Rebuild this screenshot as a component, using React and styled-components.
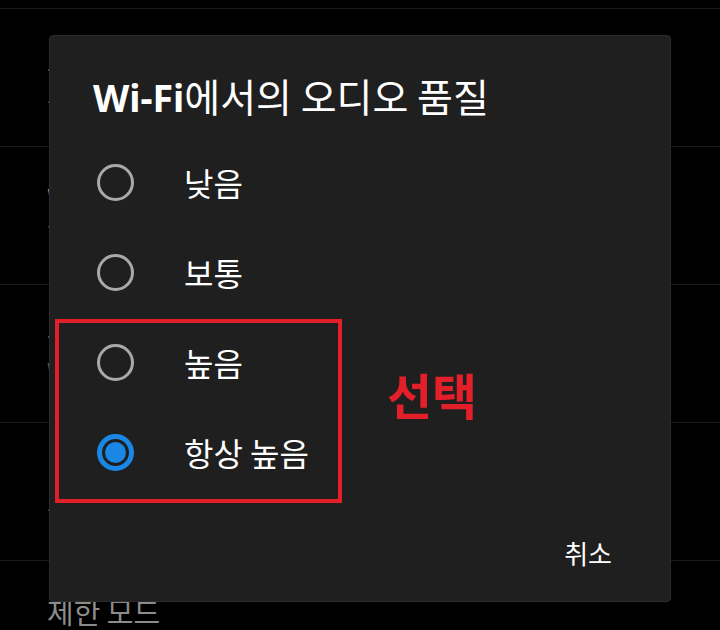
import React from "react";
import styled, { createGlobalStyle } from "styled-components";

const Global = createGlobalStyle`
  html, body { margin: 0; padding: 0; background: #000; }
  body { font-family: "Noto Sans CJK KR", "Noto Sans", sans-serif; }
  #root { width: 720px; height: 630px; overflow: hidden; }
`;

const Page = styled.div`
  position: relative;
  width: 720px;
  height: 630px;
  overflow: hidden;
  background: #000;
`;

const List = styled.div`
  display: flex;
  flex-direction: column;
  margin-top: -129px;
`;

const Row = styled.div`
  box-sizing: border-box;
  height: 138px;
  flex-shrink: 0;
  border-bottom: 1px solid #1b1b1b;
  padding: 34px 0 0 47px;
  display: flex;
  flex-direction: column;
  gap: 6px;
`;

const RowTitle = styled.div`
  font-size: 29px;
  line-height: 1.15;
  color: #8c8c8c;
  white-space: nowrap;
`;

const RowSub = styled.div`
  font-size: 21px;
  line-height: 1.2;
  color: #5e5e5e;
  white-space: nowrap;
`;

const Dialog = styled.div`
  position: absolute;
  left: 49px;
  top: 35px;
  width: 622px;
  height: 567px;
  box-sizing: border-box;
  background: #1f1f1f;
  border: 1px solid #2c2c2c;
  border-radius: 4px;
  display: flex;
  flex-direction: column;
  padding-top: 38px;
`;

const Title = styled.h2`
  margin: 0 0 18px 43px;
  font-size: 39px;
  line-height: 43px;
  font-weight: 400;
  color: #ffffff;
  white-space: nowrap;
`;

const Latin = styled.span`
  font-family: "Noto Sans", sans-serif;
  font-size: 37.5px;
  font-weight: 700;
`;

const Options = styled.div`
  display: flex;
  flex-direction: column;
`;

const Option = styled.label`
  height: 90px;
  display: flex;
  align-items: center;
  padding-left: 47px;
  gap: 50px;
  cursor: pointer;
`;

const Radio = styled.span`
  box-sizing: border-box;
  width: 37px;
  height: 37px;
  flex-shrink: 0;
  border-radius: 50%;
  border: ${(p) => (p.$checked ? "5px solid #1a87e6" : "3.5px solid #a9a9a9")};
  display: flex;
  align-items: center;
  justify-content: center;
  &::after {
    content: "";
    display: ${(p) => (p.$checked ? "block" : "none")};
    width: 21px;
    height: 21px;
    border-radius: 50%;
    background: #1a87e6;
  }
`;

const Label = styled.span`
  font-size: 32px;
  line-height: 1.2;
  color: #ffffff;
  white-space: nowrap;
`;

const Footer = styled.div`
  margin-top: auto;
  display: flex;
  justify-content: flex-end;
  padding: 0 44px 25px 0;
`;

const TextButton = styled.button`
  background: none;
  border: none;
  height: 48px;
  padding: 0 14px;
  font-family: "Noto Sans CJK KR", "Noto Sans", sans-serif;
  font-size: 26px;
  font-weight: 400;
  color: #ffffff;
  cursor: pointer;
`;

const Highlight = styled.div`
  position: absolute;
  left: 5px;
  top: 283px;
  width: 287px;
  height: 184px;
  box-sizing: border-box;
  border: 4px solid #e3202a;
  pointer-events: none;
`;

const Note = styled.div`
  position: absolute;
  left: 337px;
  top: 329px;
  font-size: 49px;
  line-height: 1.2;
  font-weight: 700;
  color: #e3202a;
  pointer-events: none;
`;

const bgRows = [
  { t: "", s: "" },
  { t: "모바일 네트워크에서의 오디오 품질", s: "보통" },
  { t: "Wi-Fi에서의 오디오 품질", s: "항상 높음" },
  { t: "동영상 스트리밍 품질", s: "Wi-Fi에서만 고화질" },
  { t: "(오디오만 재생)", s: "동영상 사용 안함" },
  { t: "제한 모드", s: "" },
];

const options = ["낮음", "보통", "높음", "항상 높음"];

export default function App() {
  const [selected, setSelected] = React.useState(3);
  return (
    <Page>
      <Global />
      <List>
        {bgRows.map((r, i) => (
          <Row key={i}>
            {r.t && <RowTitle>{r.t}</RowTitle>}
            {r.s && <RowSub>{r.s}</RowSub>}
          </Row>
        ))}
      </List>
      <Dialog>
        <Title>
          <Latin>Wi-Fi</Latin>에서의 오디오 품질
        </Title>
        <Options>
          {options.map((o, i) => (
            <Option key={o} onClick={() => setSelected(i)}>
              <Radio $checked={selected === i} />
              <Label>{o}</Label>
            </Option>
          ))}
        </Options>
        <Footer>
          <TextButton>취소</TextButton>
        </Footer>
        <Highlight />
        <Note>선택</Note>
      </Dialog>
    </Page>
  );
}
